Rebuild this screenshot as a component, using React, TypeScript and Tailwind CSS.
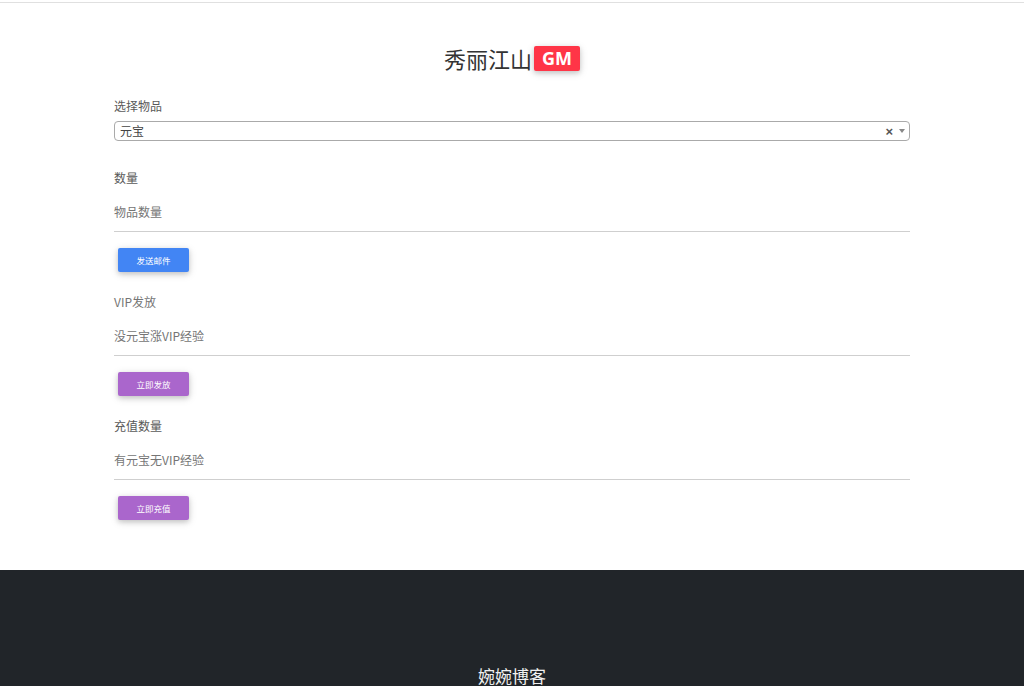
import React from "react";

const font = { fontFamily: '"Noto Sans CJK SC", "Noto Sans", sans-serif' };

function Field({ label, placeholder, btn, color, labelColor }: { label: string; placeholder: string; btn: string; color: string; labelColor: string }) {
  return (
    <div>
      <div className={`h-[20px] leading-[20px] text-[12px] ${labelColor}`}>{label}</div>
      <div className="mt-[8px] h-[36px] border-b border-[#cfcfcf] flex items-center pb-[4px] text-[12px] text-[#757575]">
        {placeholder}
      </div>
      <div className="mt-[16px] ml-[4px] flex">
        <button
          className={`block w-[71px] h-[24px] rounded-[2px] text-white text-[8.5px] leading-[24px] shadow-[0_2px_5px_0_rgba(0,0,0,0.16),0_2px_10px_0_rgba(0,0,0,0.12)] ${color}`}
        >
          {btn}
        </button>
      </div>
    </div>
  );
}

export default function App() {
  return (
    <div className="min-h-[686px] bg-white" style={font}>
      <div className="h-[3px] border-b border-[#e0e0e0]" />
      <div className="mt-[43px] flex justify-center items-center h-[25px]">
        <span className="text-[22px] leading-[25px] text-[#333]">秀丽江山</span>
        <span className="ml-[2px] h-[25px] w-[46px] bg-[#ff3547] text-white font-bold text-[18px] leading-[25px] text-center rounded-[2px] shadow-[0_2px_5px_0_rgba(0,0,0,0.16),0_2px_10px_0_rgba(0,0,0,0.12)]" style={{ fontFamily: '"Open Sans", "Noto Sans", sans-serif' }}>
          GM
        </span>
      </div>
      <div className="mx-auto w-[796px] mt-[25px]">
        <div className="h-[20px] leading-[20px] text-[12px] text-[#595959]">选择物品</div>
        <div className="mt-[5px] h-[20px] border border-[#aaa] rounded-[4px] flex items-center justify-between pl-[5px] pr-[4px]">
          <span className="text-[12px] text-[#444]">元宝</span>
          <span className="flex items-center gap-[6px]">
            <span className="text-[13px] font-bold text-[#555] leading-none" style={{ fontFamily: '"Liberation Sans", sans-serif' }}>×</span>
            <span className="w-0 h-0 border-l-[3.5px] border-r-[3.5px] border-t-[4px] border-l-transparent border-r-transparent border-t-[#888]" />
          </span>
        </div>
        <div className="mt-[27px]">
          <Field label="数量" placeholder="物品数量" btn="发送邮件" color="bg-[#4285f4]" labelColor="text-[#595959]" />
        </div>
        <div className="mt-[20px]">
          <Field label="VIP发放" placeholder="没元宝涨VIP经验" btn="立即发放" color="bg-[#aa66cc]" labelColor="text-[#757575]" />
        </div>
        <div className="mt-[20px]">
          <Field label="充值数量" placeholder="有元宝无VIP经验" btn="立即充值" color="bg-[#aa66cc]" labelColor="text-[#595959]" />
        </div>
      </div>
      <div className="mt-[50px] bg-[#212529] h-[160px] pt-[94px] text-center">
        <span className="text-[17px] leading-[24px] text-[#f0f0f0]">婉婉博客</span>
      </div>
    </div>
  );
}
